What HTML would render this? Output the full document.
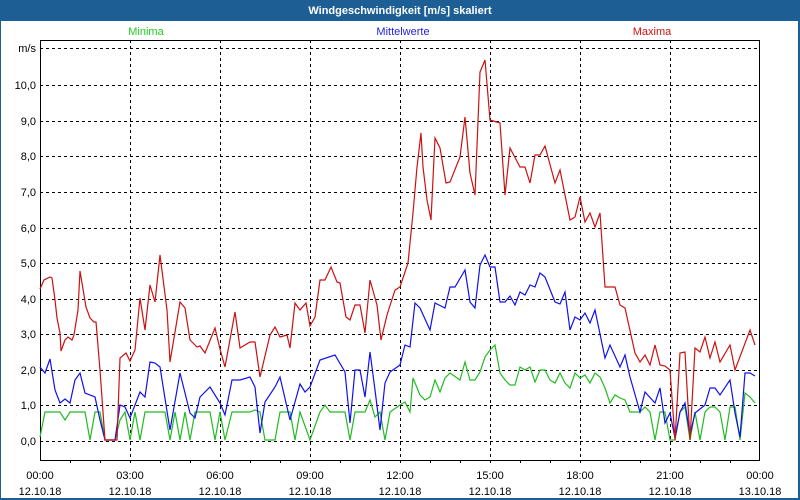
<!DOCTYPE html>
<html><head><meta charset="utf-8"><style>
body{margin:0;width:800px;height:500px;overflow:hidden;background:#fff}
</style></head><body>
<svg width="800" height="500" xmlns="http://www.w3.org/2000/svg" style="position:absolute;left:0;top:0" font-family="'Liberation Sans',sans-serif" font-size="11">
<rect x="0" y="0" width="800" height="500" fill="#1d5f95"/>
<rect x="1" y="21" width="797" height="477" fill="#fff"/>
<text x="400" y="14" fill="#fff" font-weight="bold" text-anchor="middle" font-size="11">Windgeschwindigkeit [m/s] skaliert</text>
<text x="146" y="35" fill="#22cc22" text-anchor="middle">Minima</text>
<text x="403" y="35" fill="#2222dd" text-anchor="middle">Mittelwerte</text>
<text x="652" y="35" fill="#cc1111" text-anchor="middle">Maxima</text>
<g stroke="#000" stroke-width="1" stroke-dasharray="3,3" fill="none">
<path d="M40 48.5H760M40 85.5H760M40 121.5H760M40 156.5H760M40 192.5H760M40 228.5H760M40 263.5H760M40 299.5H760M40 334.5H760M40 370.5H760M40 405.5H760M40 441.5H760"/>
<path d="M130.5 40V460M220.5 40V460M310.5 40V460M400.5 40V460M490.5 40V460M580.5 40V460M670.5 40V460"/>
</g>
<path d="M40.5 40V460.5H759.5V40.5H40" stroke="#000" fill="none"/>
<path d="M70.5 460V463M100.5 460V463M130.5 460V463M160.5 460V463M190.5 460V463M220.5 460V463M250.5 460V463M280.5 460V463M310.5 460V463M340.5 460V463M370.5 460V463M400.5 460V463M430.5 460V463M460.5 460V463M490.5 460V463M520.5 460V463M550.5 460V463M580.5 460V463M610.5 460V463M640.5 460V463M670.5 460V463M700.5 460V463M730.5 460V463" stroke="#000"/>
<g text-anchor="end" fill="#000">
<text x="36" y="52">m/s</text><text x="36" y="89">10,0</text><text x="36" y="125">9,0</text><text x="36" y="160">8,0</text><text x="36" y="196">7,0</text><text x="36" y="232">6,0</text><text x="36" y="267">5,0</text><text x="36" y="303">4,0</text><text x="36" y="338">3,0</text><text x="36" y="374">2,0</text><text x="36" y="409">1,0</text><text x="36" y="445">0,0</text>
</g>
<g text-anchor="middle" fill="#000">
<text x="40" y="479">00:00</text><text x="130" y="479">03:00</text><text x="220" y="479">06:00</text><text x="310" y="479">09:00</text><text x="400" y="479">12:00</text><text x="490" y="479">15:00</text><text x="580" y="479">18:00</text><text x="670" y="479">21:00</text><text x="760" y="479">00:00</text>
<text x="40" y="495">12.10.18</text><text x="130" y="495">12.10.18</text><text x="220" y="495">12.10.18</text><text x="310" y="495">12.10.18</text><text x="400" y="495">12.10.18</text><text x="490" y="495">12.10.18</text><text x="580" y="495">12.10.18</text><text x="670" y="495">12.10.18</text><text x="760" y="495">13.10.18</text>
</g>
<g fill="none" stroke-width="1.2">
<polyline stroke="#22bb22" points="40,437 45,412 60,412 65,420 70,412 85,412 90,440 95,412 100,412 105,440 115,440 120,420 125,412 130,440 135,412 140,440 145,412 165,412 170,440 175,412 180,440 185,412 190,440 195,412 210,412 215,440 220,412 225,440 232,412 250,412 255,410 260,412 265,440 275,440 280,412 290,412 295,440 300,412 310,440 320,412 325,405 330,412 345,412 350,440 355,412 365,412 370,400 375,417 380,412 385,440 390,412 400,405 405,402 410,412 413,378 420,395 425,400 430,397 435,380 440,392 445,378 450,373 460,380 465,362 470,380 475,380 480,372 485,357 490,350 495,345 500,373 505,380 510,385 515,385 520,367 525,370 530,367 535,382 540,370 545,370 550,380 555,383 560,373 565,383 570,388 575,373 580,378 585,375 590,383 595,373 600,377 605,388 610,403 615,395 620,398 625,400 630,412 640,412 645,407 650,412 655,440 660,412 665,412 670,440 675,440 680,412 685,407 690,440 695,412 700,440 705,412 710,407 715,407 720,412 725,440 730,407 735,407 740,440 745,393 750,397 755,403"/>
<polyline stroke="#1111ee" points="40,367 45,373 50,359 55,390 60,403 65,399 70,403 75,380 80,373 85,393 95,397 100,420 105,440 115,440 120,405 125,407 130,418 140,392 145,397 150,362 155,363 160,367 170,430 180,373 190,413 195,418 200,397 210,387 220,403 225,415 232,380 240,380 250,377 255,387 260,433 265,402 275,387 280,377 290,420 300,384 305,392 310,387 320,360 335,355 345,372 350,423 355,370 360,370 365,397 370,352 375,390 380,430 385,383 390,372 400,365 405,345 410,347 415,303 420,308 430,330 435,303 445,308 450,287 455,287 465,270 470,302 475,308 480,265 485,255 490,267 495,267 500,302 505,302 510,296 515,305 520,292 525,295 530,285 535,287 540,273 545,277 555,302 560,304 565,292 570,330 575,317 580,320 585,313 590,323 595,310 605,358 610,345 620,367 625,355 630,377 640,412 645,392 655,403 660,388 665,423 670,413 675,438 680,412 685,403 690,435 695,413 705,405 710,388 715,388 720,395 730,380 735,413 740,437 745,373 750,373 755,376"/>
<polyline stroke="#cc1111" points="40,289 44,280 50,277 52,278 55,300 57,318 60,333 61,351 65,340 68,337 72,340 74,335 78,310 80,271 86,307 90,318 94,322 96,322 100,370 105,440 117,440 120,358 126,353 130,361 135,350 140,298 145,330 150,285 155,302 160,255 167,310 170,362 180,302 185,308 190,340 197,347 200,346 205,353 215,328 220,349 225,367 235,312 240,348 250,342 255,342 260,377 270,335 275,327 280,337 287,335 290,348 295,303 300,310 306,303 310,326 315,317 320,280 325,280 331,267 337,282 340,283 346,317 350,320 355,305 360,305 365,333 370,280 377,305 381,340 387,315 395,290 400,287 408,263 413,213 417,167 421,133 423,167 427,200 431,220 435,138 440,148 446,183 450,182 460,157 465,117 470,173 475,195 480,72 485,60 490,120 500,123 505,195 510,148 520,167 525,167 530,183 535,155 540,155 545,146 555,183 560,170 570,220 575,217 580,197 585,222 590,213 595,227 600,213 605,287 615,287 620,305 625,308 635,353 640,362 645,355 650,365 655,345 660,365 665,366 670,370 675,440 680,353 685,352 690,440 695,348 700,352 705,337 710,358 715,342 720,362 730,345 735,370 750,330 755,345"/>
</g>
</svg>
</body></html>
